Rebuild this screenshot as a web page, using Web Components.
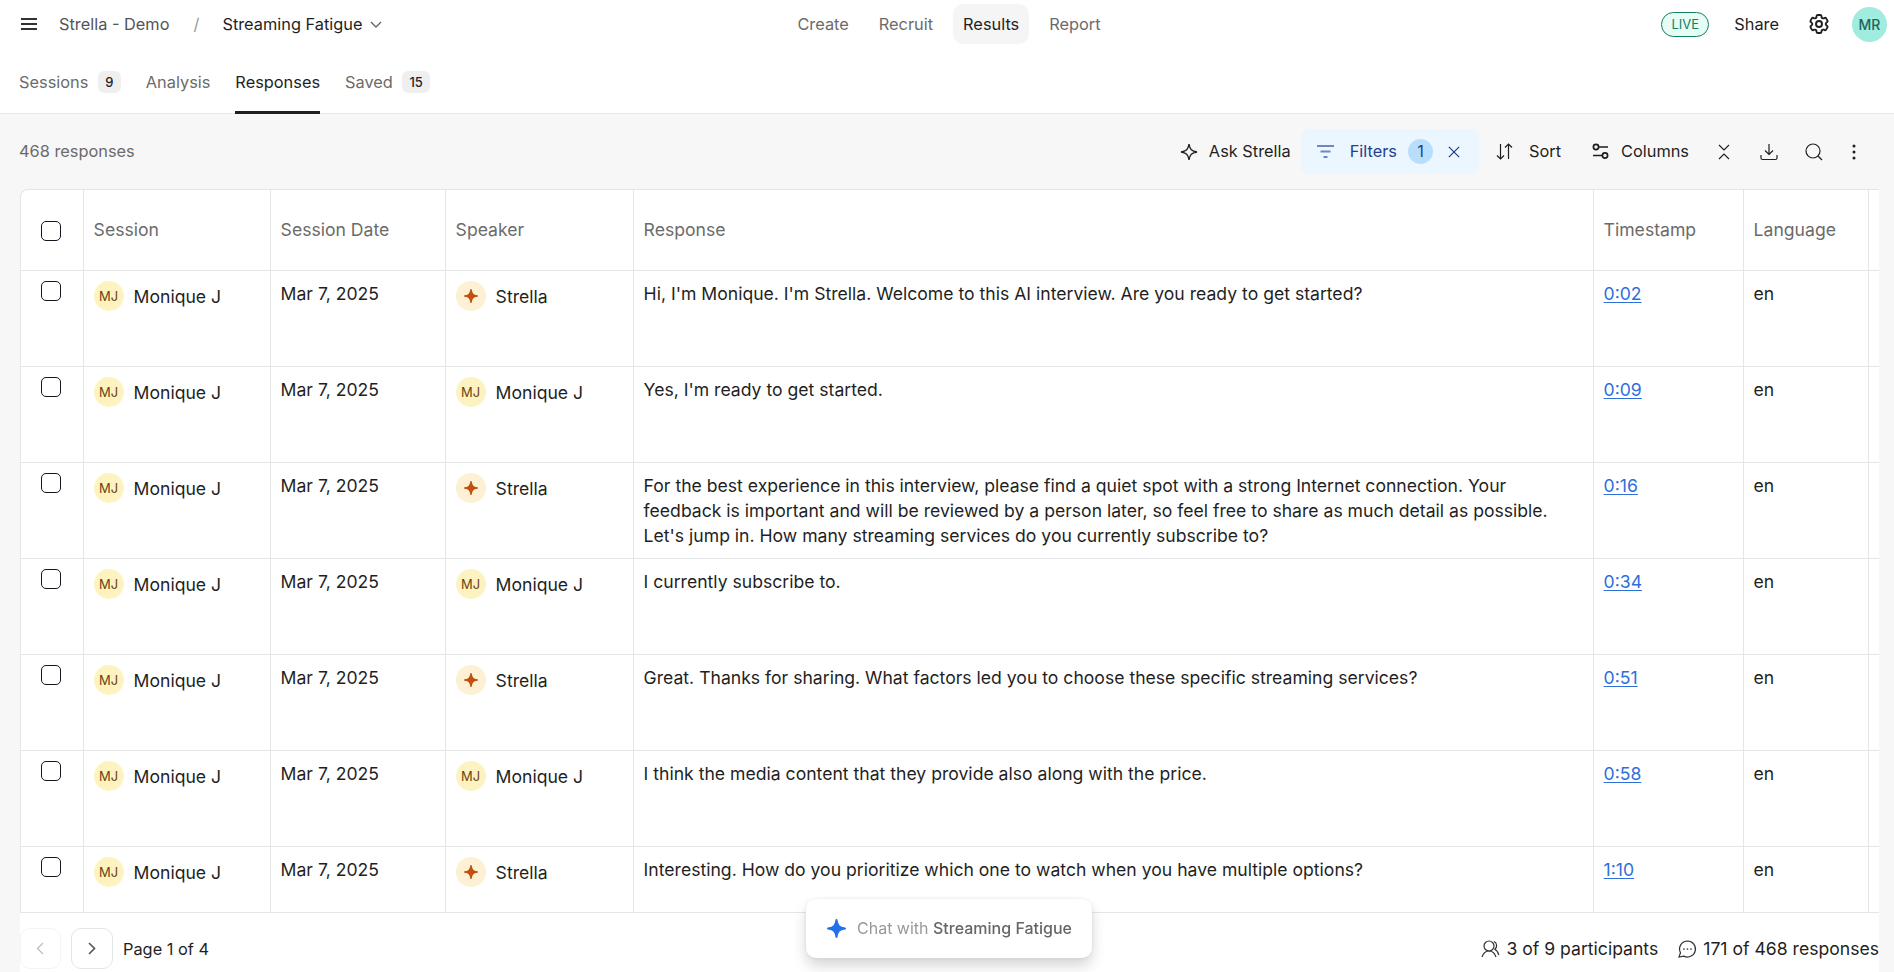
<!DOCTYPE html>
<html lang="en">
<head>
<meta charset="utf-8">
<title>Streaming Fatigue - Responses</title>
<style>
    html, body { margin: 0; height: 100%; }
    body {
        display: flex;
        flex-direction: column;
        overflow: hidden;
        background: #f7f7f7;
        color: #1f1f1f;
        font: 16.35px/24px Inter, "Liberation Sans", sans-serif;
    }
</style>
</head>
<body>
<strella-header>
    <span slot="workspace">Strella - Demo</span>
    <span slot="project">Streaming Fatigue</span>
</strella-header>
<strella-tabs></strella-tabs>
<strella-toolbar>468 responses</strella-toolbar>
<strella-table></strella-table>
<strella-pager></strella-pager>
<strella-chat>Streaming Fatigue</strella-chat>

<script>
const ICONS = {
    menu: '<path d="M0 1h16M0 6h16M0 11h16"/>',
    down: '<path d="M1 1l5 5 5-5"/>',
    gear: '<path d="M9.594 3.94c.09-.542.56-.94 1.11-.94h2.593c.55 0 1.02.398 1.11.94l.213 1.281c.063.374.313.686.645.87.074.04.147.083.22.127.325.196.72.257 1.075.124l1.217-.456a1.125 1.125 0 0 1 1.37.49l1.296 2.247a1.125 1.125 0 0 1-.26 1.431l-1.003.827c-.293.241-.438.613-.43.992a7.723 7.723 0 0 1 0 .255c-.008.378.137.75.43.991l1.004.827c.424.35.534.955.26 1.43l-1.298 2.247a1.125 1.125 0 0 1-1.369.491l-1.217-.456c-.355-.133-.75-.072-1.076.124a6.47 6.47 0 0 1-.22.128c-.331.183-.581.495-.644.869l-.213 1.281c-.09.543-.56.94-1.11.94h-2.594c-.55 0-1.019-.398-1.11-.94l-.213-1.281c-.062-.374-.312-.686-.644-.87a6.52 6.52 0 0 1-.22-.127c-.325-.196-.72-.257-1.076-.124l-1.217.456a1.125 1.125 0 0 1-1.369-.49l-1.297-2.247a1.125 1.125 0 0 1 .26-1.431l1.004-.827c.292-.24.437-.613.43-.991a6.932 6.932 0 0 1 0-.255c.007-.38-.138-.751-.43-.992l-1.004-.827a1.125 1.125 0 0 1-.26-1.43l1.297-2.247a1.125 1.125 0 0 1 1.37-.491l1.216.456c.356.133.751.072 1.076-.124.072-.044.146-.086.22-.128.332-.183.582-.495.644-.869l.214-1.28Z"/><circle cx="12" cy="12" r="3"/>',
    spark: '<path d="M9 1c.8 5.300 2.700 7.200 8 8-5.300.8-7.200 2.700-8 8-.8-5.300-2.700-7.200-8-8 5.300-.8 7.200-2.700 8-8z"/>',
    star: '<path fill="currentColor" stroke-linejoin="round" d="M9 1c.9 5.600 2.400 7.100 8 8-5.600.9-7.100 2.400-8 8-.9-5.600-2.400-7.100-8-8 5.600-.9 7.100-2.400 8-8z"/>',
    filter: '<path d="M0 2h17M3.500 7.500h10M6.500 13h4"/>',
    close: '<path d="M1 1l12 12M13 1L1 13"/>',
    sort: '<path d="M4.500 1v15M1 12.500L4.500 16 8 12.500M12.500 16V1M9 4.500L12.500 1 16 4.500"/>',
    columns: '<circle cx="4" cy="4" r="2.600"/><path d="M6.600 4H16M1 12.500h9.400"/><circle cx="13" cy="12.500" r="2.600"/>',
    collapse: '<path d="M1 1l5 5L11 1M1 15l5-5 5 5"/>',
    download: '<path d="M9 1v10.500M5 7.500l4 4 4-4M1 12v3a1.500 1.500 0 0 0 1.500 1.500h13A1.500 1.500 0 0 0 17 15v-3"/>',
    search: '<circle cx="8" cy="8" r="7"/><path d="M13 13l4 4"/>',
    dots: '<g fill="currentColor" stroke="none"><circle cx="2" cy="2" r="1.500"/><circle cx="2" cy="8" r="1.500"/><circle cx="2" cy="14" r="1.500"/></g>',
    left: '<path d="M7 1L1.500 6.500 7 12"/>',
    right: '<path d="M1 1l5.500 5.500L1 12"/>',
    people: '<circle cx="8" cy="6" r="5"/><path d="M1 17c1.300-4 3.500-6 7-6s5.700 2 7 6M13 1.500c3 1.200 3.600 5.500.8 7.800 2 .9 3.300 2.900 4 5.700"/>',
    bubble: '<path d="M9.500 1a8 8 0 1 1-3.700 15.100L1 17l1.500-4.300A8 8 0 0 1 9.500 1z"/><path d="M6 9h.01M9.500 9h.01M13 9h.01" stroke-width="1.700" stroke-linecap="round"/>',
};

// <strella-icon name="..." w="" h="" box="">
class StrellaIcon extends HTMLElement {
    constructor() {
        super();
        this._root = this.attachShadow({ mode: "open" });
    }
    connectedCallback() {
        const w = this.getAttribute("w");
        const h = this.getAttribute("h") || w;
        const box = this.getAttribute("box") || `${w} ${h}`;
        const stroke = this.getAttribute("stroke") || 1.2;
        this._root.innerHTML = `
            <style>
                :host { display: block; flex: none; }
                svg { display: block; overflow: visible; }
            </style>
            <svg width="${w}" height="${h}" viewBox="0 0 ${box}" fill="none" stroke="currentColor" stroke-width="${stroke}">${ICONS[this.getAttribute("name")]}</svg>
        `;
    }
}

class StrellaHeader extends HTMLElement {
    constructor() {
        super();
        this._root = this.attachShadow({ mode: "open" });
        this._root.innerHTML = `
            <style>
                :host { display: grid; grid-template-columns: 1fr auto 1fr; align-items: center; height: 48px; background: #fff; flex: none; }
                .crumbs, nav, .actions { display: flex; align-items: center; }
                .crumbs { padding-left: 21px; color: #555; }
                .crumbs strella-icon { color: #333; }
                .crumbs strella-icon:last-child { color: #666; }
                .workspace { margin-left: 22px; }
                .slash { margin: 0 23px 0 24px; color: #999; }
                .project { color: #1f1f1f; margin-right: 8px; }
                nav { gap: 10px; color: #6b6b6b; padding-left: 4px; }
                nav a { padding: 8px 10px; border-radius: 10px; }
                nav .on { background: #f5f5f5; color: #1f1f1f; }
                .actions { justify-content: flex-end; padding-right: 7px; }
                .live { box-sizing: border-box; width: 48px; height: 25px; border: 1px solid #12805f; border-radius: 13px; background: #e6fdf6; color: #12805f; font-size: 13px; line-height: 22px; text-align: center; }
                .share { margin: 0 28px 0 25px; }
                .me { width: 35px; height: 35px; border-radius: 50%; margin-left: 21px; background: #a0ecdf; color: #20655b; font-size: 14px; font-weight: 500; line-height: 35px; text-align: center; }
            </style>
            <div class="crumbs">
                <strella-icon name="menu" w="16" h="12" stroke="2"></strella-icon>
                <span class="workspace"><slot name="workspace"></slot></span>
                <span class="slash">/</span>
                <span class="project"><slot name="project"></slot></span>
                <strella-icon name="down" w="12" h="7" stroke="1.400"></strella-icon>
            </div>
            <nav><a>Create</a><a>Recruit</a><a class="on">Results</a><a>Report</a></nav>
            <div class="actions">
                <span class="live">LIVE</span>
                <span class="share">Share</span>
                <strella-icon name="gear" w="24" stroke="1.900"></strella-icon>
                <span class="me">MR</span>
            </div>
        `;
    }
}

class StrellaTabs extends HTMLElement {
    constructor() {
        super();
        this._root = this.attachShadow({ mode: "open" });
        this._root.innerHTML = `
            <style>
                :host { display: flex; gap: 25px; height: 65px; padding-left: 19px; background: #fff; border-bottom: 1px solid #e8e8e8; color: #6b6b6b; flex: none; }
                .tab { display: flex; align-items: center; gap: 9.500px; height: 66px; padding-top: 2px; box-sizing: border-box; }
                .on { color: #1f1f1f; box-shadow: inset 0 -3px #1f1f1f; }
                b { min-width: 9px; padding: 0 7px; border-radius: 6px; background: #efefef; color: #1f1f1f; font-size: 13px; font-weight: 500; line-height: 22px; text-align: center; }
            </style>
            <div class="tab">Sessions <b>9</b></div>
            <div class="tab">Analysis</div>
            <div class="tab on">Responses</div>
            <div class="tab">Saved <b>15</b></div>
        `;
    }
}

class StrellaToolbar extends HTMLElement {
    constructor() {
        super();
        this._root = this.attachShadow({ mode: "open" });
        this._root.innerHTML = `
            <style>
                :host { display: flex; justify-content: space-between; align-items: center; height: 75px; box-sizing: border-box; padding: 0 38px 0 19px; flex: none; }
                .count { color: #6b6b6b; padding-bottom: 1px; }
                .tools, .tool { display: flex; align-items: center; }
                .tool span { padding-bottom: 1px; }
                .filters { height: 45px; box-sizing: border-box; margin: 0 17px 0 10px; padding: 0 19px 0 16px; border-radius: 8px; background: #ebf6ff; color: #24408e; }
                .filters strella-icon:first-child { color: #7385bd; }
                .filters b { width: 25px; height: 25px; margin: 0 15px 0 11px; border-radius: 50%; background: #b9defd; font-weight: 400; line-height: 25px; text-align: center; }
            </style>
            <span class="count"><slot></slot></span>
            <div class="tools">
                <div class="tool" style="gap:11px"><strella-icon name="spark" w="18" stroke="1.300"></strella-icon><span>Ask Strella</span></div>
                <div class="tool filters">
                    <strella-icon name="filter" w="17" h="15" stroke="1.800"></strella-icon>
                    <span style="margin-left:16px">Filters</span><b>1</b>
                    <strella-icon name="close" w="12" box="14 14" stroke="1.500"></strella-icon>
                </div>
                <div class="tool" style="gap:16px"><strella-icon name="sort" w="17"></strella-icon><span>Sort</span></div>
                <div class="tool" style="gap:12px;margin:0 29px 0 31px"><strella-icon name="columns" w="17" stroke="1.700"></strella-icon><span>Columns</span></div>
                <strella-icon name="collapse" w="12" h="16"></strella-icon>
                <strella-icon name="download" w="18" style="margin:0 27px 0 30px"></strella-icon>
                <strella-icon name="search" w="18"></strella-icon>
                <strella-icon name="dots" w="4" h="16" style="margin-left:29px"></strella-icon>
            </div>
        `;
    }
}

// round avatar with a name beside it
class StrellaPerson extends HTMLElement {
    constructor() {
        super();
        this._root = this.attachShadow({ mode: "open" });
    }
    connectedCallback() {
        const bot = this.hasAttribute("bot");
        this._root.innerHTML = `
            <style>
                :host { display: flex; gap: 10px; line-height: 32px; }
                i { display: grid; place-items: center; width: 30px; height: 30px; border-radius: 50%; background: #fdf3c0; color: #6d4410; font-style: normal; font-size: 13px; line-height: 30px; }
                i.bot { background: #fdf0d3; color: #c2500f; }
            </style>
            <i class="${bot ? "bot" : ""}">${bot ? '<strella-icon name="star" w="14" box="18 18" stroke="2"></strella-icon>' : "MJ"}</i>
            <span><slot></slot></span>
        `;
    }
}

class StrellaTable extends HTMLElement {
    constructor() {
        super();
        this._root = this.attachShadow({ mode: "open" });
        this._rows = [
            { bot: true, time: "0:02", text: "Hi, I'm Monique. I'm Strella. Welcome to this AI interview. Are you ready to get started?" },
            { bot: false, time: "0:09", text: "Yes, I'm ready to get started." },
            { bot: true, time: "0:16", text: "For the best experience in this interview, please find a quiet spot with a strong Internet connection. Your feedback is important and will be reviewed by a person later, so feel free to share as much detail as possible. Let's jump in. How many streaming services do you currently subscribe to?" },
            { bot: false, time: "0:34", text: "I currently subscribe to." },
            { bot: true, time: "0:51", text: "Great. Thanks for sharing. What factors led you to choose these specific streaming services?" },
            { bot: false, time: "0:58", text: "I think the media content that they provide also along with the price." },
            { bot: true, time: "1:10", text: "Interesting. How do you prioritize which one to watch when you have multiple options?" },
        ];
    }
    connectedCallback() {
        this._root.innerHTML = `
            <style>
                :host { display: block; box-sizing: border-box; height: 724px; margin: 0 15px 0 20px; border: 1px solid #e4e6e6; border-width: 1px 0 1px 1px; border-radius: 8px 0 0 0; background: #fff; overflow: hidden; flex: none; font-size: 17.6px; line-height: 25px; }
                .row { display: grid; grid-template-columns: 63px 187px 175px 188px 960px 150px 125px 10px; height: 96px; box-sizing: border-box; border-bottom: 1px solid #e4e6e6; }
                .row > div { padding: 10px 10px 0 9.600px; border-right: 1px solid #e4e6e6; }
                .row > div:last-child { border: 0; padding: 0; }
                .row > .check { padding: 10px 0 0 20px; }
                .row > .text { padding-right: 30px; }
                .head { height: 81px; color: #6b6b6b; }
                .row.head > div { padding-top: 27px; }
                .row.head > .check { padding-top: 31px; }
                .check i { display: block; box-sizing: border-box; width: 20px; height: 20px; border: 1px solid #14141f; border-radius: 5px; }
                a { color: #2f6fdb; text-decoration: underline; text-underline-offset: 2px; }
            </style>
            <template id="row">
                <div class="row">
                    <div class="check"><i></i></div>
                    <div><strella-person>Monique J</strella-person></div>
                    <div>Mar 7, 2025</div>
                    <div class="speaker"></div>
                    <div class="text"></div>
                    <div><a></a></div>
                    <div>en</div>
                    <div></div>
                </div>
            </template>
            <div class="row head">
                <div class="check"><i></i></div><div>Session</div><div>Session Date</div><div>Speaker</div>
                <div>Response</div><div>Timestamp</div><div>Language</div><div></div>
            </div>
            <div id="body"></div>
        `;
        const template = this._root.querySelector("#row").content;
        const body = this._root.querySelector("#body");

        this._rows.forEach((row) => {
            const clone = document.importNode(template, true);
            const person = document.createElement("strella-person");
            if (row.bot) person.setAttribute("bot", "");
            person.textContent = row.bot ? "Strella" : "Monique J";
            clone.querySelector(".speaker").appendChild(person);
            clone.querySelector(".text").textContent = row.text;
            clone.querySelector("a").textContent = row.time;
            body.appendChild(clone);
        });
    }
}

class StrellaPager extends HTMLElement {
    constructor() {
        super();
        this._root = this.attachShadow({ mode: "open" });
        this._root.innerHTML = `
            <style>
                :host { display: flex; justify-content: space-between; align-items: flex-start; margin: 0 15px 0 20px; padding-top: 15px; flex: 1; background: #fff; }
                div, span { display: flex; align-items: center; }
                div { height: 41px; }
                .btn { box-sizing: border-box; width: 42px; height: 41px; justify-content: center; margin-right: 10px; border: 1px solid #e2e6e6; border-radius: 10px; color: #555; }
                .off { width: 41px; padding-right: 2px; border-color: #f3f4f4; color: #bbb; }
                .stats { gap: 20px; font-size: 17.6px; }
                .stats span { gap: 7px; }
                .stats strella-icon { color: #333; }
            </style>
            <div>
                <span class="btn off"><strella-icon name="left" w="8" h="13"></strella-icon></span>
                <span class="btn"><strella-icon name="right" w="8" h="13" stroke="1.600"></strella-icon></span>
                Page 1 of 4
            </div>
            <div class="stats">
                <span><strella-icon name="people" w="18"></strella-icon>3 of 9 participants</span>
                <span><strella-icon name="bubble" w="18"></strella-icon>171 of 468 responses</span>
            </div>
        `;
    }
}

// floats over the bottom of the table
class StrellaChat extends HTMLElement {
    constructor() {
        super();
        this._root = this.attachShadow({ mode: "open" });
        this._root.innerHTML = `
            <style>
                :host { position: fixed; left: 806px; bottom: 14px; display: flex; align-items: center; box-sizing: border-box; width: 286px; height: 59px; padding: 0 0 1px 21px; border-radius: 10px; background: #fff; box-shadow: 0 8px 14px rgba(0, 0, 0, .16), 0 0 4px rgba(0, 0, 0, .08); color: #999; font-size: 16px; }
                strella-icon { color: #2470eb; margin-right: 11px; }
                b { font-weight: 500; color: #666; }
            </style>
            <strella-icon name="star" w="19" box="18 18" stroke="2"></strella-icon>
            <span>Chat with <b><slot></slot></b></span>
        `;
    }
}

customElements.define("strella-icon", StrellaIcon);
customElements.define("strella-header", StrellaHeader);
customElements.define("strella-tabs", StrellaTabs);
customElements.define("strella-toolbar", StrellaToolbar);
customElements.define("strella-person", StrellaPerson);
customElements.define("strella-table", StrellaTable);
customElements.define("strella-pager", StrellaPager);
customElements.define("strella-chat", StrellaChat);
</script>
</body>
</html>
